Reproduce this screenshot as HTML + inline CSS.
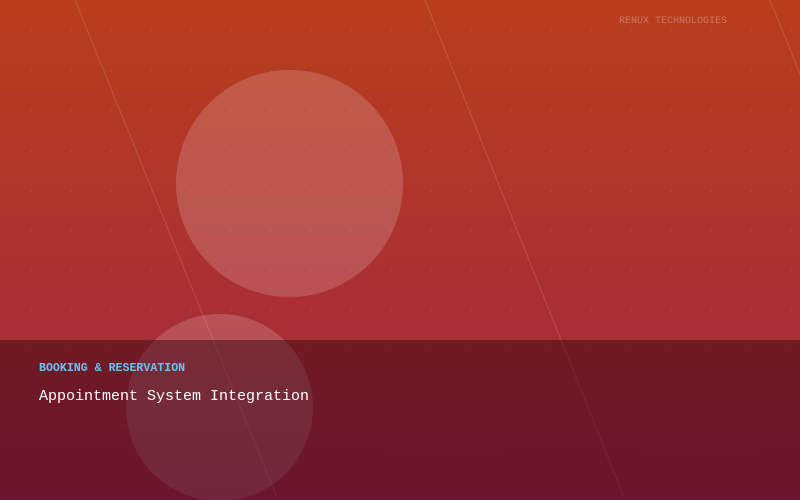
<!DOCTYPE html>
<html><head><style>
html,body{margin:0;width:800px;height:500px;overflow:hidden;}
body{position:relative;font-family:"Liberation Mono",monospace;
background:linear-gradient(180deg,#b83e1c 0%,#ab2f34 60%,#a42a40 100%);}
.dots{position:absolute;inset:0;background-image:radial-gradient(circle,rgba(255,255,255,0.06) 0.8px,transparent 1px);background-size:40px 40px;background-position:11px 11px;}
.c{position:absolute;border-radius:50%;background:rgba(255,255,255,0.17);}
.panel{position:absolute;left:0;top:340px;width:800px;height:160px;background:linear-gradient(180deg,rgba(50,5,15,0.48),rgba(50,0,30,0.5));}
.t1{position:absolute;left:39px;top:362px;color:#6cc0f4;font-weight:bold;font-size:11.6px;}
.t2{position:absolute;left:39px;top:388px;color:#fff;font-size:15px;}
.brand{position:absolute;left:619px;top:16px;color:rgba(255,255,255,0.3);font-size:10px;}
</style></head><body>
<div class="dots"></div>
<div class="c" style="left:176px;top:70px;width:227px;height:227px"></div>
<div class="c" style="left:126px;top:314px;width:187px;height:187px"></div>
<svg style="position:absolute;left:0;top:0" width="800" height="500"><g stroke="rgba(255,255,255,0.14)" stroke-width="1"><line x1="75" y1="0" x2="278" y2="500"/><line x1="425" y1="0" x2="625" y2="500"/><line x1="770" y1="0" x2="830" y2="148"/></g></svg>
<div class="panel"></div>
<div class="brand">RENUX TECHNOLOGIES</div>
<div class="t1">BOOKING &amp; RESERVATION</div>
<div class="t2">Appointment System Integration</div>
</body></html>
